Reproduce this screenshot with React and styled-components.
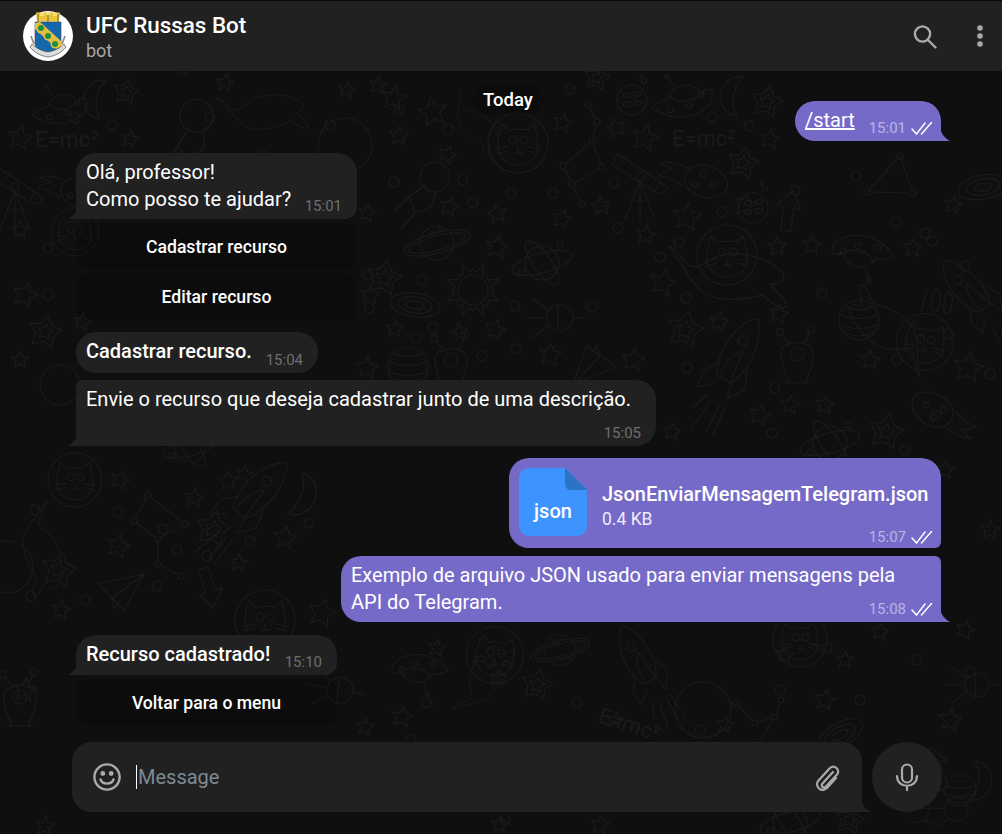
import React from "react";
import styled, { createGlobalStyle } from "styled-components";

const GlobalStyle = createGlobalStyle`
  html, body { margin: 0; padding: 0; background: #0f0f0f; }
  body { font-family: Roboto, "Liberation Sans", sans-serif; color: #fff; }
`;

const Page = styled.div`
  position: relative;
  width: 1002px;
  height: 834px;
  overflow: hidden;
  display: flex;
  flex-direction: column;
  background: #0f0f0f;
`;

const Wallpaper = styled.svg`
  position: absolute;
  inset: 0;
  fill: none;
  stroke: #1b1b1b;
  stroke-width: 1.2;
  stroke-linecap: round;
  stroke-linejoin: round;
`;

const Header = styled.header`
  position: relative;
  flex: none;
  height: 70px;
  border-top: 1px solid #0a0a0a;
  background: #212121;
  display: flex;
  align-items: center;
  padding: 0 16px 0 23px;
`;

const Avatar = styled.svg`
  width: 50px;
  height: 50px;
  flex: none;
`;

const ChatInfo = styled.div`
  margin-left: 13px;
  flex: 1;
  display: flex;
  flex-direction: column;
  margin-top: 1px;
`;

const ChatTitle = styled.div`
  font-size: 22.4px;
  font-weight: 500;
  line-height: 27px;
`;

const ChatStatus = styled.div`
  font-size: 18px;
  line-height: 23px;
  color: #aaaaaa;
`;

const HeaderIcon = styled.svg`
  flex: none;
  margin-left: ${(p) => p.$gap}px;
  fill: ${(p) => (p.$solid ? "#aaaaaa" : "none")};
  stroke: ${(p) => (p.$solid ? "none" : "#aaaaaa")};
`;

const Messages = styled.main`
  position: relative;
  flex: 1;
  min-height: 0;
  display: flex;
  flex-direction: column;
  padding: 30px 61px 0 76px;
`;

const DateRow = styled.div`
  position: absolute;
  top: 15px;
  left: 0;
  width: 1016px;
  display: flex;
  justify-content: center;
`;

const DatePill = styled.div`
  padding: 2px 10px;
  border-radius: 14px;
  background: rgba(0, 0, 0, 0.2);
  font-size: 18.5px;
  font-weight: 500;
  line-height: 24px;
`;

const Bubble = styled.div`
  position: relative;
  box-sizing: border-box;
  width: ${(p) => p.$width}px;
  min-height: ${(p) => p.$height}px;
  margin-top: ${(p) => p.$top}px;
  align-self: ${(p) => (p.$out ? "flex-end" : "flex-start")};
  padding: 6px 10px;
  border-radius: ${(p) => p.$radius || "20px"};
  background: ${(p) => (p.$out ? "#766ac8" : "#212121")};
  font-size: 20px;
  line-height: 27px;
  font-weight: ${(p) => (p.$bold ? 500 : 400)};
`;

const Tail = styled.svg`
  position: absolute;
  bottom: 0;
  width: 10px;
  height: 17px;
  ${(p) => (p.$right ? "right: -9px;" : "left: -8px; transform: scaleX(-1);")}
  fill: ${(p) => p.$fill};
`;

const Meta = styled.div`
  position: absolute;
  right: ${(p) => (p.$out ? 8 : 15)}px;
  bottom: ${(p) => p.$bottom || 3}px;
  display: flex;
  align-items: center;
  gap: 5px;
  font-size: 15px;
  font-weight: 400;
  line-height: 20px;
  color: ${(p) => (p.$out ? "rgba(255,255,255,.5)" : "#6e6e6e")};
`;

const Checks = styled.svg`
  width: 22px;
  height: 14px;
  fill: none;
  stroke: #fff;
  stroke-width: 1.5;
  stroke-linecap: round;
`;

const Command = styled.span`
  text-decoration: underline;
`;

const Keyboard = styled.div`
  margin-top: ${(p) => p.$top}px;
  width: ${(p) => p.$width}px;
  display: flex;
  flex-direction: column;
  gap: 3px;
`;

const KeyButton = styled.button`
  height: 47px;
  border: 0;
  padding: 0;
  border-radius: 12px;
  background: rgba(0, 0, 0, 0.14);
  color: #fff;
  font-family: inherit;
  font-size: 17.6px;
  font-weight: 500;
`;

const FileRow = styled.div`
  display: flex;
  align-items: center;
  gap: 15px;
  margin-top: 4px;
`;

const FileIcon = styled.div`
  position: relative;
  flex: none;
  width: 68px;
  height: 68px;
  box-sizing: border-box;
  padding-top: 31px;
  border-radius: 10px;
  background: #3d94ff;
  clip-path: polygon(0 0, 68% 0, 100% 32%, 100% 100%, 0 100%);
  text-align: center;
  font-size: 20px;
  font-weight: 500;
  line-height: 24px;
`;

const FileFold = styled.div`
  position: absolute;
  top: 0;
  right: 0;
  width: 22px;
  height: 22px;
  border-bottom-left-radius: 6px;
  background: #2b73c4;
`;

const FileText = styled.div`
  margin-top: 7px;
  display: flex;
  flex-direction: column;
`;

const FileName = styled.div`
  font-size: 20px;
  font-weight: 500;
  line-height: 26px;
  white-space: nowrap;
`;

const FileSize = styled.div`
  font-size: 17.5px;
  line-height: 24px;
  color: rgba(255, 255, 255, 0.9);
`;

const ComposerRow = styled.footer`
  position: relative;
  flex: none;
  display: flex;
  gap: 10px;
  padding: 0 60px 22px 72px;
`;

const Composer = styled.div`
  position: relative;
  flex: 1;
  height: 70px;
  display: flex;
  align-items: center;
  padding: 0 22px 0 21px;
  border-radius: 20px 20px 0 20px;
  background: #212121;
`;

const Placeholder = styled.div`
  flex: 1;
  margin-left: 15px;
  padding-left: 1px;
  border-left: 1px solid #fff;
  font-size: 20px;
  line-height: 24px;
  color: #7d8a94;
`;

const MicButton = styled.div`
  flex: none;
  width: 70px;
  height: 70px;
  border-radius: 50%;
  background: #212121;
  display: flex;
  align-items: center;
  justify-content: center;
`;

const GreyIcon = styled.svg`
  flex: none;
  fill: none;
  stroke: #aaaaaa;
  stroke-linecap: round;
  stroke-linejoin: round;
`;

const Formula = styled.text`
  fill: #1b1b1b;
  stroke: none;
  font-family: Roboto, sans-serif;
  font-size: 22px;
`;

// ---- wallpaper doodles ----
const starPoints = (r, rot = -90, inner = 0.45) => {
  const pts = [];
  for (let i = 0; i < 10; i++) {
    const rad = i % 2 ? r * inner : r;
    const a = ((rot + i * 36) * Math.PI) / 180;
    pts.push(`${(rad * Math.cos(a)).toFixed(1)},${(rad * Math.sin(a)).toFixed(1)}`);
  }
  return pts.join(" ");
};

// x, y, radius, rotation
const stars = [
  [378, 85, 9, 10], [433, 112, 15, -10], [399, 136, 10, 5], [447, 155, 10, 20], [563, 123, 10, 15], [616, 128, 10, -15],
  [645, 138, 14, 12], [770, 139, 10, 10], [449, 207, 10, 15], [497, 214, 10, -10], [562, 219, 10, 15], [601, 206, 10, -5],
  [687, 217, 15, 8], [646, 235, 10, 10], [497, 247, 12, 10], [777, 247, 10, 0], [663, 283, 14, 15], [395, 329, 9, 5],
  [460, 332, 9, -10], [495, 330, 11, 15], [550, 355, 12, 5], [633, 360, 12, 10], [719, 322, 10, 10], [367, 213, 9, 10],
  [367, 368, 12, 5], [118, 546, 12, 15], [244, 474, 9, 10], [194, 498, 10, 10], [228, 481, 10, -5], [285, 538, 12, 10],
  [239, 563, 9, 5], [120, 480, 10, 20], [61, 610, 10, 10], [322, 613, 15, 15], [20, 138, 13, 10], [130, 139, 9, 10],
  [20, 230, 9, 5], [25, 295, 13, 15], [82, 322, 9, 10], [225, 83, 9, 10], [347, 90, 9, 10], [394, 98, 13, 10],
  [20, 360, 9, 0], [370, 295, 10, 5], [745, 205, 12, 10], [812, 245, 10, 5], [779, 314, 10, 10], [870, 360, 10, 5],
  [953, 205, 9, 10], [913, 248, 10, 5], [760, 415, 11, 15], [790, 405, 10, 5], [825, 405, 10, 10], [672, 432, 9, 5],
  [968, 368, 16, 10], [845, 660, 9, 5], [437, 648, 9, 10], [498, 678, 9, 5], [402, 717, 11, 10], [365, 727, 9, 5],
  [785, 655, 9, 10], [725, 725, 9, 5], [825, 700, 11, 10], [950, 720, 12, 8], [615, 720, 9, 10], [880, 632, 9, 5],
  [965, 630, 10, 15], [945, 470, 10, 5], [990, 530, 10, 5], [500, 825, 9, 5], [600, 825, 10, 5], [25, 690, 12, 8],
  [45, 826, 10, 5],
];

const doubleStars = [
  [597, 78, 13], [767, 102, 16], [743, 163, 16], [384, 278, 18], [685, 330, 19], [886, 432, 18], [213, 529, 18],
  [59, 570, 18], [126, 92, 13], [45, 332, 17], [537, 685, 16], [850, 820, 15],
];

const dots = [
  [399, 109], [448, 129], [570, 89], [394, 182], [463, 180], [473, 203], [511, 193], [553, 193], [614, 183], [618, 228],
  [679, 243], [660, 257], [722, 212], [422, 280], [515, 306], [592, 307], [686, 298], [369, 308], [433, 328], [416, 338],
  [482, 356], [516, 349], [687, 368], [712, 117], [749, 126], [35, 510], [118, 512], [163, 529], [177, 550], [207, 556],
  [250, 541], [309, 523], [31, 596], [85, 600], [157, 586], [210, 117], [75, 118], [112, 125], [262, 155], [183, 70],
  [48, 248], [48, 295], [368, 275], [330, 125], [795, 190], [856, 176], [822, 293], [896, 222], [932, 241], [965, 266],
  [925, 233], [948, 334], [897, 360], [775, 388], [772, 433], [905, 450], [990, 374], [936, 415], [490, 662], [427, 703],
  [411, 740], [577, 703], [563, 745], [827, 648], [917, 660], [860, 700], [970, 672], [780, 690], [700, 730], [505, 820],
];

const Star = ({ at: [x, y, r, rot = 0] }) => (
  <polygon transform={`translate(${x} ${y}) rotate(${rot})`} points={starPoints(r)} />
);

const DoubleStar = ({ at: [x, y, r] }) => (
  <g transform={`translate(${x} ${y}) rotate(12)`}>
    <polygon points={starPoints(r, -90, 0.55)} />
    <polygon points={starPoints(r * 0.5, -90, 0.5)} />
  </g>
);

const place = (x, y, s = 1, r = 0) => `translate(${x} ${y}) rotate(${r}) scale(${s})`;

const HelmetCat = ({ x, y, s, r }) => (
  <g transform={place(x, y, s, r)}>
    <circle r="30" />
    <path d="M-20 2C-20-8-18-14-16-19L-9-12C-4-14 4-14 9-13L16-19C19-10 20-3 20 3C20 16 10 22 0 22C-12 22-20 14-20 2Z" />
    <circle cx="-5" cy="-3" r="4" />
    <circle cx="6" cy="-3" r="4" />
    <path d="M0 4V9M-4 10C-2 11-1 10 0 9C1 10 3 11 5 10M-22 6L-10 4M-22 11L-10 8M22 6L10 4M22 11L10 8" />
  </g>
);

const CatBody = ({ x, y, s, r }) => (
  <path
    transform={place(x, y, s, r)}
    d="M-34-14C-22-4-18 12-6 24C4 36 30 36 52 30C60 36 70 46 74 40C72 30 62 26 60 20C70 22 78 12 64 4C50-6 28-10 14-6C4-4-8 10-16 2C-24-6-28-14-34-14Z"
  />
);

const Saturn = ({ x, y, s, r }) => (
  <g transform={place(x, y, s, r)}>
    <circle r="17" />
    <ellipse rx="34" ry="10" transform="rotate(-15)" />
    <ellipse rx="29" ry="7" transform="rotate(-15)" />
    <circle cx="-5" cy="-9" r="2.5" />
    <circle cx="3" cy="-13" r="2" />
  </g>
);

const Atom = ({ x, y, s, r }) => (
  <g transform={place(x, y, s, r)}>
    <circle r="17" />
    <ellipse rx="31" ry="10" transform="rotate(-15)" />
    <ellipse rx="26" ry="9" transform="rotate(55)" />
    <circle cx="-20" cy="9" r="3" />
    <circle cx="18" cy="-18" r="3" />
  </g>
);

const Rocket = ({ x, y, s, r }) => (
  <g transform={place(x, y, s, r)}>
    <path d="M16-38C-6-28-20-4-20 18L-6 26C10 16 24-8 22-36C22-37 18-38 16-38Z" />
    <path d="M-18 6L-34 14L-40 30L-24 26M-6 26L-10 42L8 32L10 12M-16 16C-10 2-2-4 6-6C0 8-4 18-6 26" />
    <circle cx="6" cy="-16" r="5" />
    <path d="M-30 38L-44 50M-26 44L-46 72M-18 48L-30 74M-12 50L-24 78" />
  </g>
);

const Planet = ({ x, y, s, r }) => (
  <g transform={place(x, y, s, r)}>
    <circle r="20" />
    <path d="M-19-6C-8 0 8 0 19-6M-20 4C-8 10 8 10 20 4M-16 12C-6 17 6 17 16 12M-14-14C-6-9 6-9 14-14" />
  </g>
);

const Spotted = ({ x, y, s }) => (
  <g transform={place(x, y, s)}>
    <circle r="15" />
    <ellipse cx="-5" cy="-5" rx="4" ry="2.2" transform="rotate(-15 -5 -5)" />
    <ellipse cx="6" cy="-6" rx="4" ry="2.2" transform="rotate(-15 6 -6)" />
    <ellipse cx="-5" cy="4" rx="4" ry="2.2" transform="rotate(-15 -5 4)" />
    <ellipse cx="6" cy="3" rx="4" ry="2.2" transform="rotate(-15 6 3)" />
    <circle cx="12" cy="-19" r="2.5" />
    <circle cx="9" cy="-24" r="1.5" />
  </g>
);

const Ufo = ({ x, y, s, r }) => (
  <g transform={place(x, y, s, r)}>
    <path d="M-30 8C-22-2-14 0-14 0C-12-16 10-20 18-8C24-10 32-16 30-2C26 14 -4 26-30 8Z" />
    <circle cx="-12" cy="10" r="3" />
    <circle cx="7" cy="5" r="3" />
    <circle cx="19" cy="-5" r="3" />
    <path d="M-12-4C-4 4 10 2 22-8M-14-22L-8-14" />
    <circle cx="-15" cy="-24" r="2" />
  </g>
);

const Moon = ({ x, y, s, r }) => (
  <path transform={place(x, y, s, r)} d="M6-20C-10-22-18-8-16 4C-14 14-6 20 0 18C-6 10-6-8 6-20Z" />
);

const Telescope = ({ x, y, s, r }) => (
  <g transform={place(x, y, s, r)}>
    <path d="M-22-26L20 2L14 12L-28-16ZM20 2L28 8L24 14L14 12" />
    <circle cx="0" cy="-3" r="4" />
    <path d="M0 0L-15 40M0 0L14 38M0 0V40M-8 20H8" />
  </g>
);

const Meteor = ({ x, y, s, r }) => (
  <g transform={place(x, y, s, r)}>
    <path d="M-6-10C6-18 26-10 30 4C34 18 14 22 2 18C-12 14-18-2-6-10Z" />
    <circle cx="6" cy="-4" r="3" />
    <circle cx="-2" cy="6" r="3" />
    <circle cx="16" cy="6" r="3" />
    <path d="M-8-10C-18-14-28-18-36-14C-30-12-26-10-24-8C-30-8-34-6-38-2C-30-2-22 2-14 8" />
  </g>
);

const Sun = ({ x, y, s }) => (
  <g transform={place(x, y, s)}>
    <circle r="15" />
    {Array.from({ length: 16 }, (_, i) => {
      const a = (i * 22.5 * Math.PI) / 180;
      const o = i % 2 ? 28 : 21;
      return <path key={i} d={`M${(18 * Math.cos(a + 0.2)).toFixed(1)} ${(18 * Math.sin(a + 0.2)).toFixed(1)}L${(o * Math.cos(a)).toFixed(1)} ${(o * Math.sin(a)).toFixed(1)}L${(18 * Math.cos(a - 0.2)).toFixed(1)} ${(18 * Math.sin(a - 0.2)).toFixed(1)}`} />;
    })}
  </g>
);

const Galaxy = ({ x, y, s, r }) => (
  <g transform={place(x, y, s, r)}>
    <ellipse rx="25" ry="12" />
    <ellipse rx="17" ry="8" />
    <ellipse rx="9" ry="4" />
  </g>
);

const Alien = ({ x, y, s, r }) => (
  <g transform={place(x, y, s, r)}>
    <path d="M-16-4C-16-18 16-18 16-4C16 10 8 26 8 26H-8C-8 26-16 10-16-4Z" />
    <circle cy="-3" r="7" />
    <path d="M-8-14L-15-23M8-14L13-25M-8 26H-14M8 26H14" />
    <circle cx="-17" cy="-25" r="3.5" />
    <circle cx="14" cy="-28" r="3.5" />
  </g>
);

const Plane = ({ x, y, s, r }) => (
  <path transform={place(x, y, s, r)} d="M-24-6L22-16L2 20L-10 8L-24-6ZM22-16L-10 8L-8 18L-2 12" />
);

const Arrow = ({ x, y, s, r }) => (
  <path transform={place(x, y, s, r)} d="M0-20L12-4H5L8 20L-2 21L-5-2H-12Z" />
);

const Capsule = ({ x, y, s, r }) => (
  <g transform={place(x, y, s, r)}>
    <circle cx="10" cy="-10" r="15" />
    <path d="M0 -2L-16 10L-10 26L6 20L12 4M-16 10L-30 24M-10 26L-24 42" />
  </g>
);

const Sputnik = ({ x, y, s, r }) => (
  <g transform={place(x, y, s, r)}>
    <circle r="13" />
    <path d="M-2-13V13M-36 0H-13M-28-20L-12-8M-28 20L-12 8M13 0H24" />
  </g>
);

const Constellation = ({ points, links }) => (
  <g>
    {links.map(([a, b], i) => (
      <line key={i} x1={points[a][0]} y1={points[a][1]} x2={points[b][0]} y2={points[b][1]} />
    ))}
    {points.map(([x, y], i) => (
      <circle key={i} cx={x} cy={y} r="3" fill="#0f0f0f" />
    ))}
  </g>
);

const Doodles = () => (
  <Wallpaper width="1002" height="834" viewBox="0 0 1002 834">
    {stars.map((s, i) => <Star key={i} at={s} />)}
    {doubleStars.map((s, i) => <DoubleStar key={i} at={s} />)}
    {dots.map(([x, y], i) => <circle key={i} cx={x} cy={y} r="5" />)}

    <HelmetCat x={518} y={143} s={1} />
    <CatBody x={470} y={110} s={0.6} r={40} />
    <HelmetCat x={727} y={255} s={1} />
    <CatBody x={705} y={262} s={1.1} />
    <HelmetCat x={925} y={342} s={0.95} r={10} />
    <CatBody x={900} y={350} s={0.9} r={-150} />
    <HelmetCat x={265} y={620} s={1} />
    <HelmetCat x={495} y={655} s={0.95} r={10} />
    <CatBody x={470} y={690} s={0.7} r={-70} />
    <HelmetCat x={800} y={640} s={0.9} />
    <HelmetCat x={75} y={232} s={0.8} />
    <HelmetCat x={75} y={480} s={0.9} />
    <CatBody x={45} y={530} s={0.8} r={70} />
    <CatBody x={245} y={105} s={0.8} r={-10} />

    <Constellation
      points={[[588, 105], [597, 122], [592, 141], [602, 167], [572, 184], [563, 166], [582, 204]]}
      links={[[0, 1], [1, 2], [2, 3], [3, 4], [4, 5], [5, 2], [4, 6]]}
    />
    <Constellation
      points={[[867, 192], [900, 156], [913, 193]]}
      links={[[0, 1], [1, 2], [2, 0]]}
    />
    <Constellation
      points={[[148, 495], [134, 521], [158, 539], [185, 524], [158, 564], [181, 576]]}
      links={[[0, 1], [1, 2], [2, 3], [3, 0], [2, 4], [4, 5]]}
    />
    <Constellation
      points={[[781, 700], [775, 717], [759, 742], [755, 723], [736, 703]]}
      links={[[0, 1], [1, 2], [1, 3], [3, 4]]}
    />

    <Ufo x={682} y={100} />
    <Ufo x={60} y={108} s={0.9} />
    <Ufo x={863} y={253} s={1} r={-160} />
    <Ufo x={420} y={670} s={0.9} r={-165} />
    <Moon x={737} y={97} s={1} />
    <Moon x={100} y={100} s={1} />
    <Moon x={298} y={493} s={1.1} r={190} />
    <Moon x={975} y={780} s={1} r={180} />
    <Spotted x={632} y={100} s={1} />
    <Spotted x={753} y={208} s={1} />
    <Telescope x={640} y={180} s={1} />
    <Telescope x={15} y={190} s={1} />
    <Meteor x={697} y={178} s={1} />
    <Meteor x={72} y={190} s={0.9} />
    <Meteor x={940} y={415} s={1} r={-165} />
    <Arrow x={788} y={210} s={1} r={15} />
    <Arrow x={210} y={588} s={1} r={170} />
    <Arrow x={935} y={768} s={1.1} r={-15} />
    <Capsule x={425} y={187} s={1} />
    <Capsule x={190} y={130} s={1.1} r={-20} />
    <Capsule x={945} y={810} s={0.8} r={40} />
    <Saturn x={437} y={243} s={1} />
    <Saturn x={560} y={650} s={0.9} />
    <Atom x={542} y={263} s={1} />
    <Atom x={830} y={443} s={1} />
    <Atom x={190} y={447} s={0.9} />
    <Atom x={790} y={822} s={1} />
    <Sun x={473} y={290} s={1} />
    <Galaxy x={415} y={305} s={1} r={8} />
    <Galaxy x={983} y={187} s={1} r={-10} />
    <Galaxy x={840} y={735} s={1} r={-30} />
    <Sputnik x={560} y={318} s={1} />
    <Sputnik x={340} y={690} s={1} r={10} />
    <Sputnik x={977} y={685} s={0.9} />
    <Rocket x={737} y={357} s={1} />
    <Rocket x={257} y={495} s={1} r={15} />
    <Rocket x={970} y={290} s={0.9} r={-70} />
    <Rocket x={640} y={660} s={0.9} r={-55} />
    <Planet x={859} y={320} s={1} />
    <Planet x={408} y={367} s={1} />
    <Planet x={960} y={790} s={0.8} />
    <Alien x={451} y={363} s={1} />
    <Alien x={797} y={357} s={1} />
    <Alien x={20} y={700} s={1} />
    <Plane x={592} y={365} s={1} r={170} />
    <Plane x={122} y={590} s={1} />
    <Formula x="672" y="146">E=mc²</Formula>
    <Formula x="35" y="147">E=mc²</Formula>
    <Formula x="597" y="722" transform="rotate(18 597 722)">E=mc²</Formula>
    <path d="M927 290l-6 22M937 289C932 289 930 310 934 312C940 312 943 292 937 289ZM949 292C944 292 942 312 946 314C952 314 955 295 949 292Z" />
    <circle cx="703" cy="710" r="28" />
    <circle cx="7" cy="567" r="26" />
    <circle cx="345" cy="145" r="27" />
    <circle cx="60" cy="385" r="20" />
  </Wallpaper>
);

// ---- small drawings ----
const Crest = () => (
  <Avatar viewBox="0 0 50 50">
    <circle cx="25" cy="25" r="25" fill="#fff" />
    <path d="M13 1.5h24l-1 9H14z" fill="#e9c33a" />
    <path d="M15 3v8M25 2v9M35 3v8" stroke="#8a7a2a" strokeWidth="1.2" />
    <path d="M17 2h4v3h-4zM23 1h4v3h-4zM30 2h4v3h-4z" fill="#f7e17a" />
    <path d="M12 11h26v22c0 6-7 9-13 11-6-2-13-5-13-11z" fill="#1567ab" stroke="#444" strokeWidth=".6" />
    <path d="M12 12l5-1 21 19v6l-4 2L12 18z" fill="#e7bd3f" />
    <circle cx="18" cy="18" r="4.5" fill="#e7bd3f" />
    <circle cx="25" cy="25" r="4.5" fill="#e7bd3f" />
    <circle cx="32" cy="33" r="4.5" fill="#e7bd3f" />
    <circle cx="18" cy="17" r="3" fill="#1d8f42" />
    <circle cx="25" cy="25" r="3" fill="#1d8f42" />
    <circle cx="32" cy="33" r="3" fill="#1d8f42" />
    <path d="M8 25l3 8M42 25l-3 8" stroke="#888" strokeWidth="1.6" />
    <path d="M7 36c5 6 11 9 18 10 7-1 13-4 18-10l-2-3c-5 5-10 7-16 8-6-1-11-3-16-8z" fill="#ddd" stroke="#555" strokeWidth=".7" />
  </Avatar>
);

const DoubleCheck = () => (
  <Checks viewBox="0 0 22 14">
    <path d="M1 8l4.5 5L14 2" />
    <path d="M10.5 13L20.5 1.5" />
  </Checks>
);

const Stamp = ({ out, time, bottom }) => (
  <Meta $out={out} $bottom={bottom}>
    {time}
    {out && <DoubleCheck />}
  </Meta>
);

const TailShape = ({ right, fill }) => (
  <Tail $right={right} $fill={fill} viewBox="0 0 10 17">
    <path d="M0 0C0 8 3 13 10 17H0Z" />
  </Tail>
);

export default function App() {
  return (
    <Page>
      <GlobalStyle />
      <Doodles />
      <Header>
        <Crest />
        <ChatInfo>
          <ChatTitle>UFC Russas Bot</ChatTitle>
          <ChatStatus>bot</ChatStatus>
        </ChatInfo>
        <HeaderIcon $gap={0} width="24" height="25" viewBox="0 0 24 25" strokeWidth="2.4" strokeLinecap="round">
          <circle cx="9.5" cy="10" r="7.6" />
          <path d="M15 16L22.5 23.5" />
        </HeaderIcon>
        <HeaderIcon $solid $gap={37} width="12" height="26" viewBox="0 0 12 26">
          <circle cx="6" cy="5" r="2.8" />
          <circle cx="6" cy="13" r="2.8" />
          <circle cx="6" cy="21" r="2.8" />
        </HeaderIcon>
      </Header>

      <Messages>
        <DateRow>
          <DatePill>Today</DatePill>
        </DateRow>

        <Bubble $out $width={146} $height={40} $top={0} $radius="20px 20px 0 20px">
          <Command>/start</Command>
          <Stamp out time="15:01" />
          <TailShape right fill="#766ac8" />
        </Bubble>

        <Bubble $width={281} $height={66} $top={12} $radius="20px 20px 12px 0">
          Olá, professor!
          <br />
          Como posso te ajudar?
          <Stamp time="15:01" />
          <TailShape fill="#212121" />
        </Bubble>
        <Keyboard $width={281} $top={4}>
          <KeyButton>Cadastrar recurso</KeyButton>
          <KeyButton>Editar recurso</KeyButton>
        </Keyboard>

        <Bubble $bold $width={242} $height={41} $top={12}>
          Cadastrar recurso.
          <Stamp time="15:04" />
        </Bubble>
        <Bubble $width={580} $height={66} $top={7} $radius="6px 20px 20px 0">
          Envie o recurso que deseja cadastrar junto de uma descrição.
          <Stamp time="15:05" />
          <TailShape fill="#212121" />
        </Bubble>

        <Bubble $out $width={432} $height={90} $top={12} $radius="20px 20px 6px 20px">
          <FileRow>
            <FileIcon>
              <FileFold />
              json
            </FileIcon>
            <FileText>
              <FileName>JsonEnviarMensagemTelegram.json</FileName>
              <FileSize>0.4 KB</FileSize>
            </FileText>
          </FileRow>
          <Stamp out time="15:07" bottom={1} />
        </Bubble>
        <Bubble $out $width={600} $height={66} $top={8} $radius="20px 6px 0 20px">
          Exemplo de arquivo JSON usado para enviar mensagens pela
          <br />
          API do Telegram.
          <Stamp out time="15:08" />
          <TailShape right fill="#766ac8" />
        </Bubble>

        <Bubble $bold $width={261} $height={40} $top={13} $radius="20px 20px 12px 0">
          Recurso cadastrado!
          <Stamp time="15:10" />
          <TailShape fill="#212121" />
        </Bubble>
        <Keyboard $width={261} $top={4}>
          <KeyButton>Voltar para o menu</KeyButton>
        </Keyboard>
      </Messages>

      <ComposerRow>
        <Composer>
          <GreyIcon width="28" height="28" viewBox="0 0 28 28" strokeWidth="2.4">
            <circle cx="14" cy="14" r="12.6" />
            <path d="M7.5 16.5C9.5 22 18.5 22 20.5 16.5" />
            <circle cx="9.8" cy="10.5" r="1.2" />
            <circle cx="18.2" cy="10.5" r="1.2" />
          </GreyIcon>
          <Placeholder>Message</Placeholder>
          <GreyIcon width="26" height="28" viewBox="0 0 26 28" strokeWidth="2.2">
            <path d="M19 9L8.5 20.5C6.5 23 9.5 26 12 23.5L23 11.5C26.5 7 20.5 1 16 5L4.5 17.5C0 23 7 30 13 25L22 15" />
          </GreyIcon>
          <TailShape right fill="#212121" />
        </Composer>
        <MicButton>
          <GreyIcon width="24" height="28" viewBox="0 0 24 28" strokeWidth="2.2">
            <rect x="7" y="1.5" width="10" height="18" rx="5" />
            <path d="M2 13C2 26 22 26 22 13M12 23V27" />
          </GreyIcon>
        </MicButton>
      </ComposerRow>
    </Page>
  );
}
